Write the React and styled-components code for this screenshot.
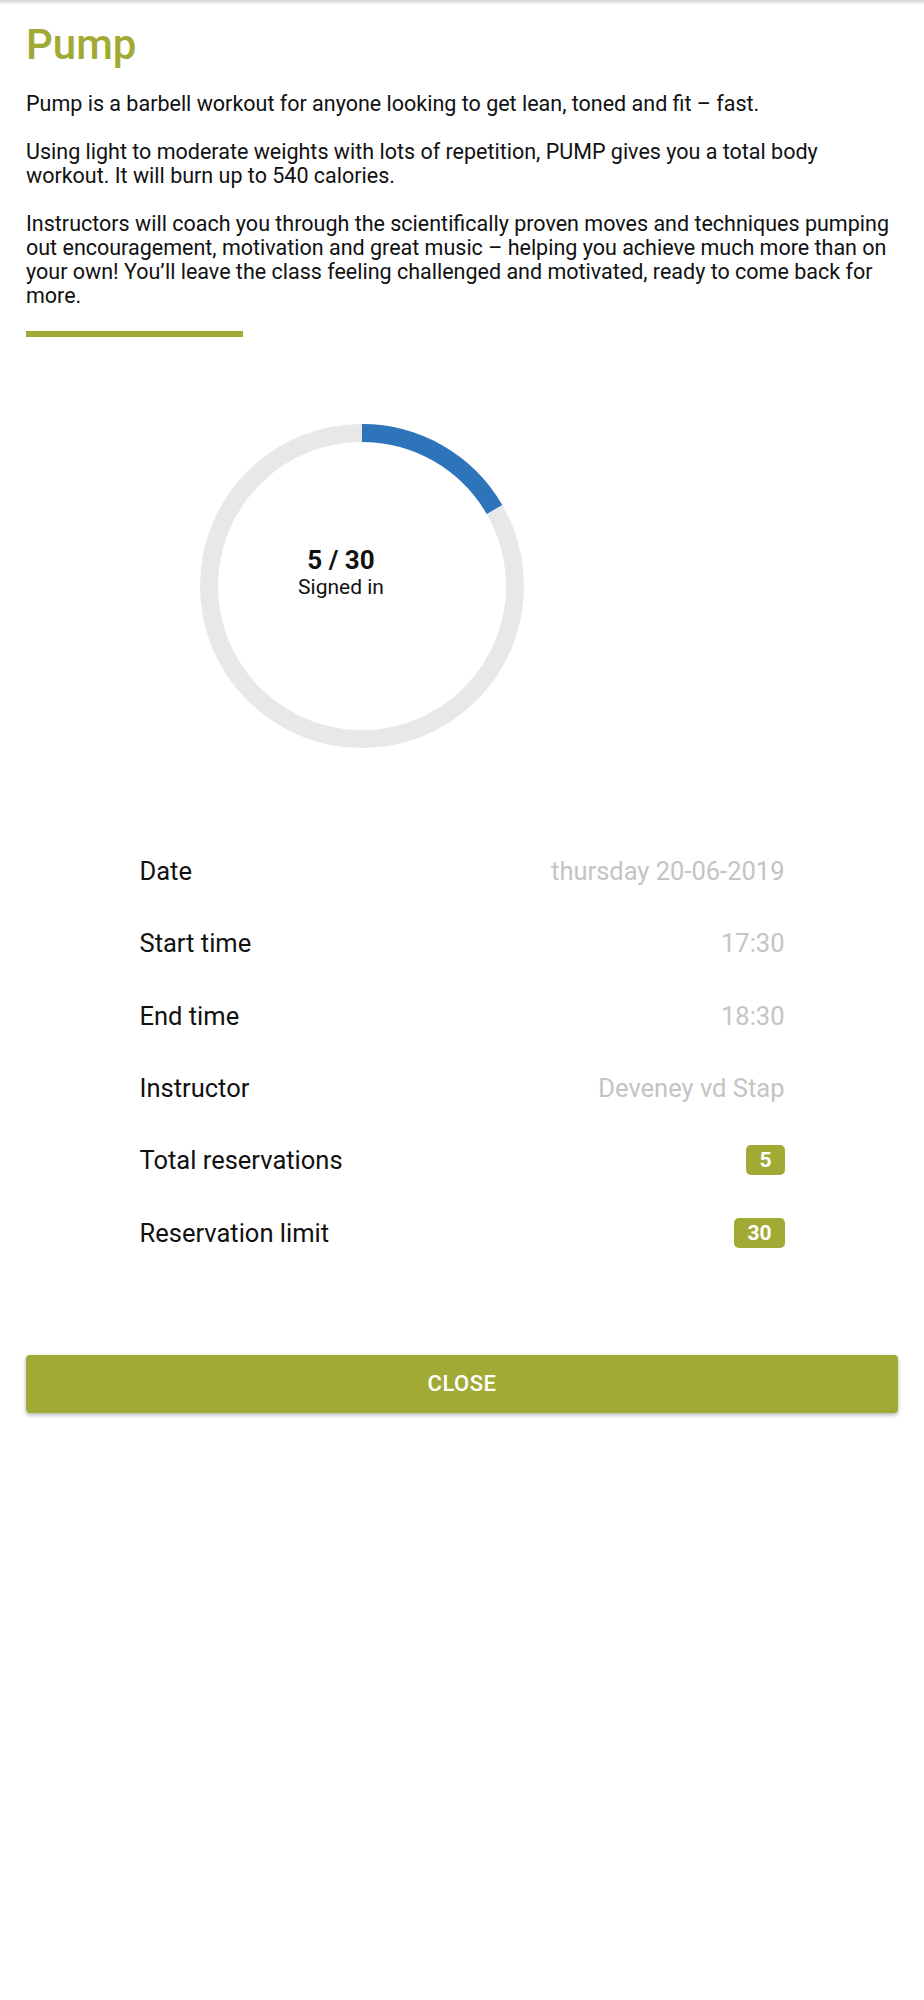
import React from "react";
import styled, { createGlobalStyle } from "styled-components";

const GlobalStyle = createGlobalStyle`
  html, body { margin: 0; padding: 0; background: #ffffff; }
  body { font-family: Roboto, "Noto Sans", Arial, sans-serif; color: #111; }
`;

const OLIVE = "#a2aa36";

const Page = styled.div`
  position: relative;
  min-height: 2000px;
  background: #fff;
`;

const TopShadow = styled.div`
  height: 5px;
  background: linear-gradient(#d4d4d4, rgba(255, 255, 255, 0));
  margin-bottom: -5px;
`;

const Content = styled.div`
  padding: 20px 26px 0;
  display: flex;
  flex-direction: column;
`;

const Title = styled.h1`
  margin: 0;
  font-size: 42px;
  line-height: 50px;
  font-weight: 500;
  color: ${OLIVE};
`;

const Description = styled.div`
  margin-top: 22px;
  display: flex;
  flex-direction: column;
  gap: 24px;
`;

const Para = styled.p`
  margin: 0;
  font-size: 21.5px;
  line-height: 24px;
  color: #111;
`;

const Divider = styled.div`
  margin-top: 23px;
  width: 217px;
  height: 6px;
  background: ${OLIVE};
`;

const ChartArea = styled.div`
  margin-top: 87px;
  margin-left: 174px;
  position: relative;
  width: 324px;
  height: 324px;
`;

const ChartLabel = styled.div`
  position: absolute;
  left: 0;
  top: 121px;
  width: 282px;
  text-align: center;
`;

const Count = styled.div`
  font-size: 26px;
  line-height: 30px;
  font-weight: 700;
  color: #111;
`;

const Caption = styled.div`
  font-size: 21px;
  line-height: 24px;
  color: #111;
`;

const DetailList = styled.div`
  margin: 87px auto 0;
  width: 645px;
  display: flex;
  flex-direction: column;
`;

const Row = styled.div`
  height: 72.3px;
  display: flex;
  align-items: center;
  justify-content: space-between;
`;

const Label = styled.span`
  font-size: 25.5px;
  color: #111;
`;

const Value = styled.span`
  font-size: 25.5px;
  color: #c4c4c4;
`;

const Badge = styled.span`
  display: inline-flex;
  align-items: center;
  justify-content: center;
  height: 30px;
  padding: 0 13px;
  border-radius: 5px;
  background: ${OLIVE};
  color: #fff;
  font-size: 21px;
  font-weight: 700;
`;

const CloseButton = styled.button`
  margin-top: 86px;
  height: 58px;
  width: 100%;
  border: none;
  border-radius: 4px;
  background: ${OLIVE};
  color: #fff;
  font-family: Roboto, Arial, sans-serif;
  font-size: 22px;
  font-weight: 500;
  letter-spacing: 0.5px;
  box-shadow: 0 2px 4px rgba(0, 0, 0, 0.3);
  cursor: pointer;
`;

function Ring({ value, max }) {
  const size = 324;
  const stroke = 18;
  const r = (size - stroke) / 2;
  const c = size / 2;
  const angle = (value / max) * 2 * Math.PI;
  const x = c + r * Math.sin(angle);
  const y = c - r * Math.cos(angle);
  const large = angle > Math.PI ? 1 : 0;
  return (
    <svg width={size} height={size} viewBox={`0 0 ${size} ${size}`}>
      <circle cx={c} cy={c} r={r} fill="none" stroke="#e8e8e8" strokeWidth={stroke} />
      <path
        d={`M ${c} ${c - r} A ${r} ${r} 0 ${large} 1 ${x} ${y}`}
        fill="none"
        stroke="#2e74ba"
        strokeWidth={stroke}
      />
    </svg>
  );
}

const details = [
  { label: "Date", value: "thursday 20-06-2019" },
  { label: "Start time", value: "17:30" },
  { label: "End time", value: "18:30" },
  { label: "Instructor", value: "Deveney vd Stap" },
  { label: "Total reservations", badge: "5" },
  { label: "Reservation limit", badge: "30" },
];

export default function App() {
  return (
    <>
      <GlobalStyle />
      <Page>
        <TopShadow />
        <Content>
          <Title>Pump</Title>
          <Description>
            <Para>Pump is a barbell workout for anyone looking to get lean, toned and fit – fast.</Para>
            <Para>
              Using light to moderate weights with lots of repetition, PUMP gives you a total body workout. It will burn
              up to 540 calories.
            </Para>
            <Para>
              Instructors will coach you through the scientifically proven moves and techniques pumping out
              encouragement, motivation and great music – helping you achieve much more than on your own! You’ll leave
              the class feeling challenged and motivated, ready to come back for more.
            </Para>
          </Description>
          <Divider />
          <ChartArea>
            <Ring value={5} max={30} />
            <ChartLabel>
              <Count>5 / 30</Count>
              <Caption>Signed in</Caption>
            </ChartLabel>
          </ChartArea>
          <DetailList>
            {details.map((d) => (
              <Row key={d.label}>
                <Label>{d.label}</Label>
                {d.badge ? <Badge>{d.badge}</Badge> : <Value>{d.value}</Value>}
              </Row>
            ))}
          </DetailList>
          <CloseButton>CLOSE</CloseButton>
        </Content>
      </Page>
    </>
  );
}
